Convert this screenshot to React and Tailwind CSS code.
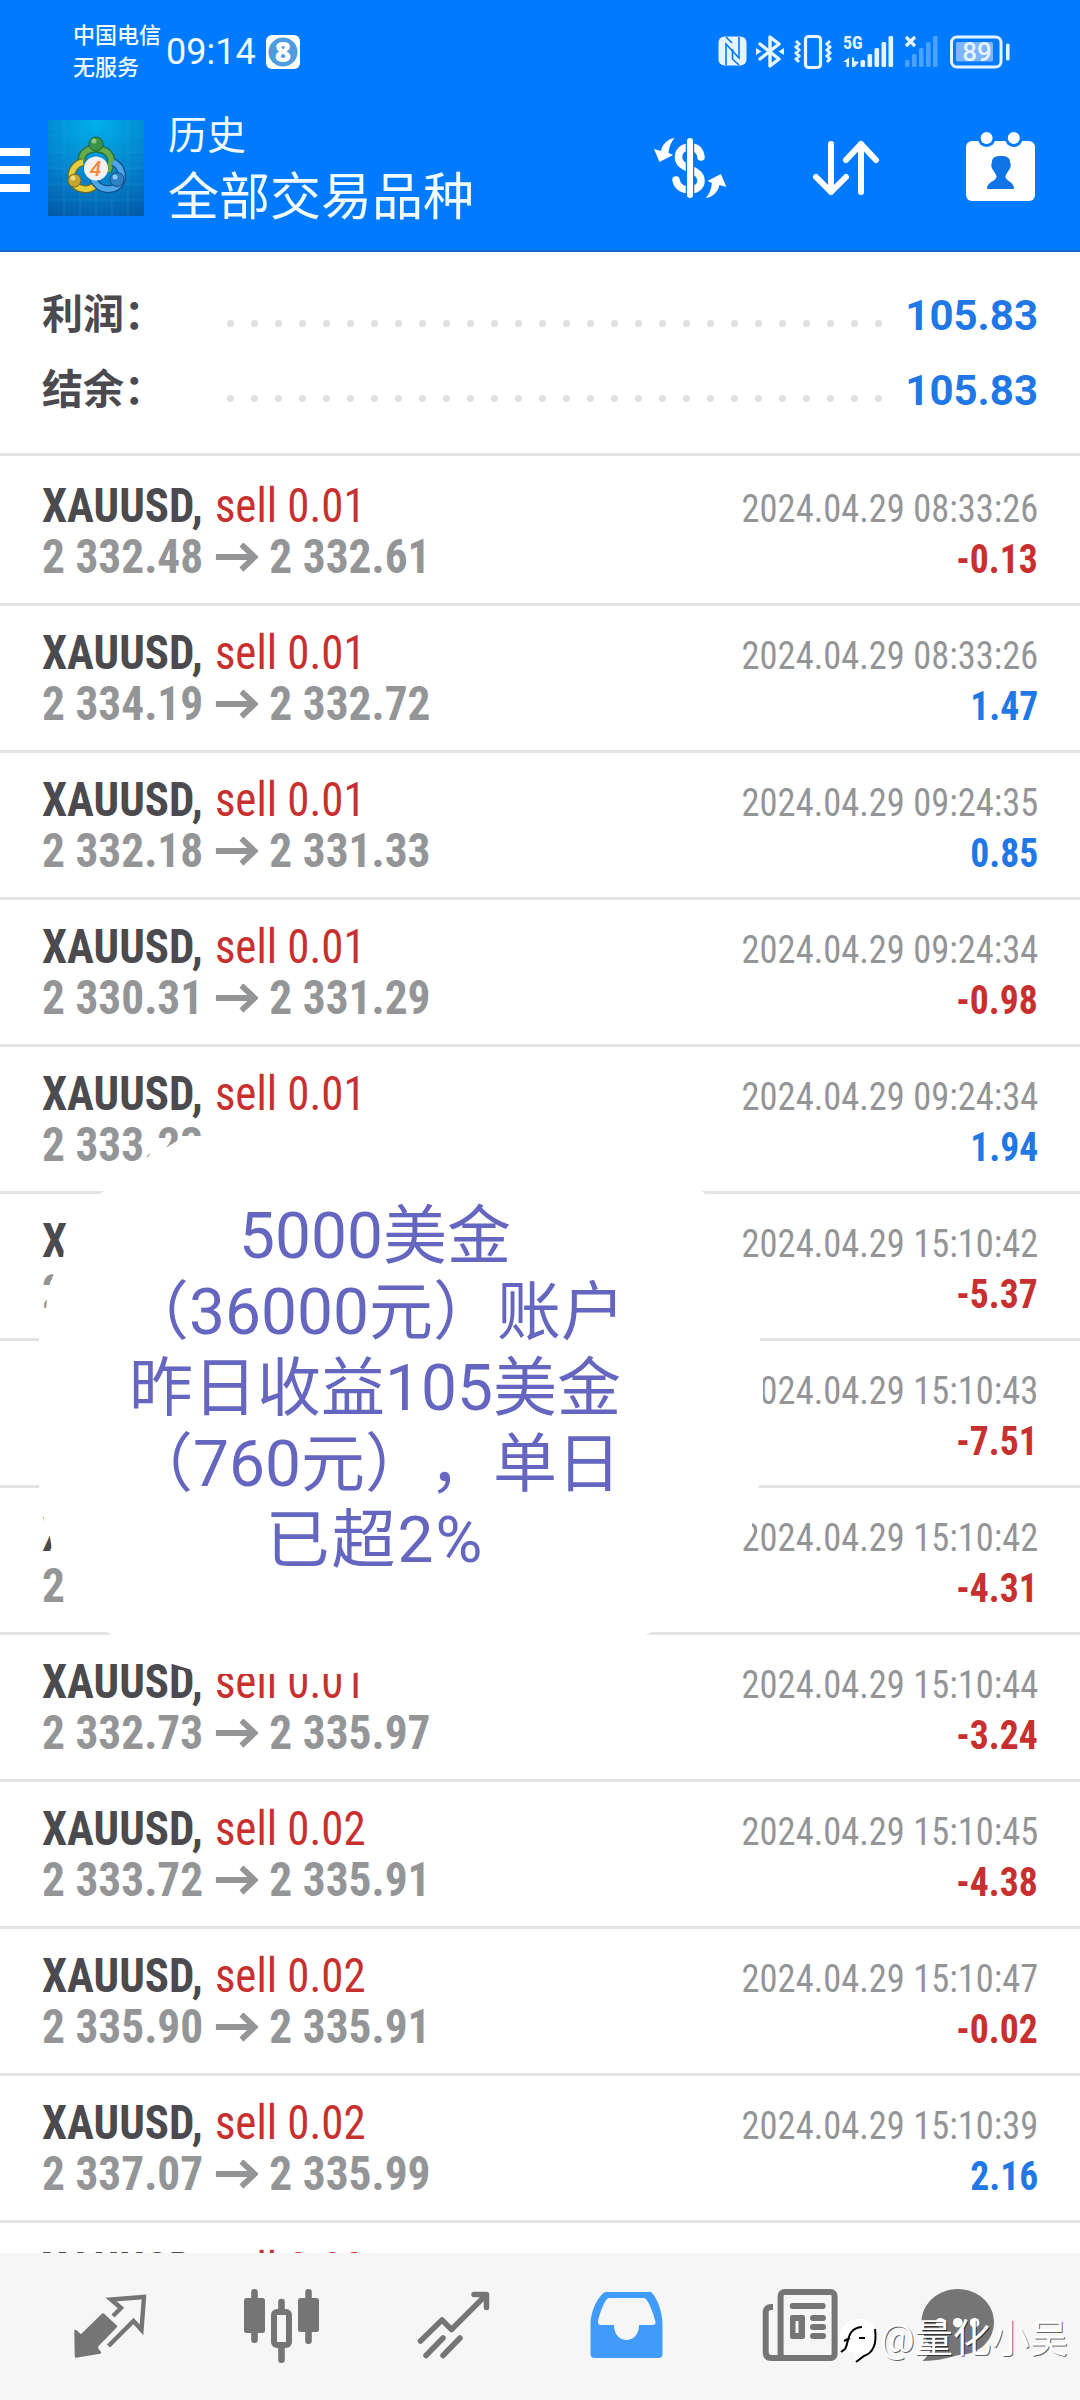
const DEALS = [
    { symbol: "XAUUSD", side: "sell 0.01", open: "2 332.48", close: "2 332.61", time: "2024.04.29 08:33:26", profit: "-0.13" },
    { symbol: "XAUUSD", side: "sell 0.01", open: "2 334.19", close: "2 332.72", time: "2024.04.29 08:33:26", profit: "1.47" },
    { symbol: "XAUUSD", side: "sell 0.01", open: "2 332.18", close: "2 331.33", time: "2024.04.29 09:24:35", profit: "0.85" },
    { symbol: "XAUUSD", side: "sell 0.01", open: "2 330.31", close: "2 331.29", time: "2024.04.29 09:24:34", profit: "-0.98" },
    { symbol: "XAUUSD", side: "sell 0.01", open: "2 333.23", close: "2 331.29", time: "2024.04.29 09:24:34", profit: "1.94" },
    { symbol: "XAUUSD", side: "sell 0.01", open: "2 330.60", close: "2 335.97", time: "2024.04.29 15:10:42", profit: "-5.37" },
    { symbol: "XAUUSD", side: "sell 0.01", open: "2 328.46", close: "2 335.97", time: "2024.04.29 15:10:43", profit: "-7.51" },
    { symbol: "XAUUSD", side: "sell 0.01", open: "2 331.66", close: "2 335.97", time: "2024.04.29 15:10:42", profit: "-4.31" },
    { symbol: "XAUUSD", side: "sell 0.01", open: "2 332.73", close: "2 335.97", time: "2024.04.29 15:10:44", profit: "-3.24" },
    { symbol: "XAUUSD", side: "sell 0.02", open: "2 333.72", close: "2 335.91", time: "2024.04.29 15:10:45", profit: "-4.38" },
    { symbol: "XAUUSD", side: "sell 0.02", open: "2 335.90", close: "2 335.91", time: "2024.04.29 15:10:47", profit: "-0.02" },
    { symbol: "XAUUSD", side: "sell 0.02", open: "2 337.07", close: "2 335.99", time: "2024.04.29 15:10:39", profit: "2.16" },
    { symbol: "XAUUSD", side: "sell 0.02", open: "", close: "", time: "", profit: "" },
]

const BAR_TOPS = [26, 20, 14, 8, 2]

const StatusIcons = () => (
    <div className="flex items-center text-[#e6f4ff]">
        {/* NFC */}
        <svg className="h-9 w-[29px]" viewBox="0 0 29 36">
            <rect x="0.5" y="2.5" width="28" height="29" rx="6" fill="currentColor" />
            <path d="M8 31V10L21 24V3" fill="none" stroke="#007aff" strokeWidth="1.6" />
            <path d="M8 3L14 9M14.5 15V25L21 31" fill="none" stroke="#007aff" strokeWidth="1.6" />
        </svg>
        {/* Bluetooth */}
        <svg className="ml-[9px] h-9 w-[28px]" viewBox="0 0 28 36">
            <path d="M4 10L23 25L14 32V3L23 10L4 25" fill="none" stroke="currentColor" strokeWidth="3.4" strokeLinejoin="round" strokeLinecap="round" />
            <path d="M0 14L5.5 17.5L0 21ZM28 14L22.5 17.5L28 21Z" fill="currentColor" />
        </svg>
        {/* Vibration */}
        <svg className="ml-[10px] h-9 w-[38px]" viewBox="0 0 38 36">
            <rect x="11.5" y="2.5" width="15" height="31" rx="3" fill="none" stroke="currentColor" strokeWidth="3.2" />
            <path d="M2 7L5 10L2 13L5 16L2 19L5 22L2 25L5 28M36 7L33 10L36 13L33 16L36 19L33 22L36 25L33 28" fill="none" stroke="currentColor" strokeWidth="3" />
        </svg>
        {/* 5G signal */}
        <svg className="ml-[11px] h-9 w-[51px]" viewBox="0 0 51 36">
            <text x="0" y="15" className="font-['Roboto_Condensed'] text-[18px] font-bold" fill="currentColor">5G</text>
            <path d="M0 28L6 23.5V33H3.5V28ZM9 23.5H11V27L16 28L11.5 33H9Z" fill="currentColor" />
            {BAR_TOPS.map((top, i) => (
                <rect key={top} x={17.5 + i * 7} y={top} width="4.6" height={33 - top} rx="1.5" fill="currentColor" />
            ))}
        </svg>
        {/* No service */}
        <svg className="ml-[10px] h-9 w-[34px]" viewBox="0 0 34 36">
            <path d="M2 3L11 12M11 3L2 12" stroke="currentColor" strokeWidth="3.2" />
            <g opacity="0.32">
                {BAR_TOPS.map((top, i) => (
                    <rect key={top} x={1 + i * 7} y={top} width="4.6" height={33 - top} rx="1.5" fill="currentColor" />
                ))}
            </g>
        </svg>
        {/* Battery */}
        <svg className="ml-[12px] h-9 w-[60px]" viewBox="0 0 60 36">
            <rect x="1.5" y="3" width="49.5" height="30" rx="5.5" fill="none" stroke="currentColor" strokeWidth="3" />
            <rect x="6" y="8" width="37" height="19.5" rx="1.5" fill="#80b4f8" />
            <rect x="56" y="9.5" width="3.6" height="17" rx="1.5" fill="currentColor" />
            <text x="27" y="27" textAnchor="middle" className="font-['Roboto'] text-[26px] font-medium" fill="currentColor">89</text>
        </svg>
    </div>
)

const AppLogo = () => (
    <svg className="h-24 w-24 shrink-0" viewBox="0 0 96 96">
        <defs>
            <radialGradient id="logoBg" cx="0.5" cy="0" r="1.1">
                <stop offset="0" stopColor="#00b1ea" />
                <stop offset="0.55" stopColor="#0384cd" />
                <stop offset="1" stopColor="#0459a9" />
            </radialGradient>
        </defs>
        <rect width="96" height="96" fill="url(#logoBg)" />
        <path d="M0 16H96M0 32H96M0 48H96M0 64H96M0 80H96M16 0V96M32 0V96M48 0V96M64 0V96M80 0V96" stroke="#3fb5e8" strokeOpacity="0.2" />
        <path d="M34 42C30 24 66 24 63 43L60 52" fill="none" stroke="#2b6b3a" strokeWidth="8" />
        <path d="M34 42C30 24 66 24 63 43L60 52" fill="none" stroke="#62ad4c" strokeWidth="5.5" />
        <path d="M35 42C19 46 20 68 36 69C42 70 46 67 49 63" fill="none" stroke="#6a6a25" strokeWidth="8" />
        <path d="M35 42C19 46 20 68 36 69C42 70 46 67 49 63" fill="none" stroke="#e5cf3c" strokeWidth="5.5" />
        <path d="M65 42C78 48 77 68 62 69C54 70 48 65 45 59" fill="none" stroke="#164e8c" strokeWidth="8" />
        <path d="M65 42C78 48 77 68 62 69C54 70 48 65 45 59" fill="none" stroke="#4ba7e8" strokeWidth="5.5" />
        <circle cx="48" cy="24" r="7" fill="#3b944a" stroke="#1f6133" />
        <circle cx="46" cy="21" r="2.5" fill="#8ccc7f" />
        <circle cx="26.5" cy="60.5" r="6.5" fill="#c6a52f" stroke="#77692b" />
        <circle cx="25" cy="58" r="2.5" fill="#ecdc7c" />
        <circle cx="69" cy="59.5" r="7" fill="#2f7fc4" stroke="#174d86" />
        <circle cx="67" cy="57" r="2.5" fill="#8ccaf4" />
        <circle cx="48" cy="48.5" r="12" fill="#f5f1ee" />
        <text x="47.5" y="56" textAnchor="middle" className="font-['Roboto'] text-[21px] font-medium italic" fill="#f08a3c">4</text>
    </svg>
)

const SWAP_ARROW = "M24.5 4C17 5 12 11 11 17L4 15L9.5 28L23 21L18.500 19C19 13 21 8 24.5 4Z"

const CurrencyIcon = () => (
    <svg className="h-[68px] w-20" viewBox="0 0 80 68">
        <path d="M51 23C50 16 46 13 40 13C33 13 28.5 17 28.5 23C28.5 30 34 32 40 35C47 38 51 41 51 47C51 52.5 46 56 40 56C32 56 27 52 26 46" fill="none" stroke="white" strokeWidth="7.5" strokeLinecap="round" />
        <path d="M40 7V61" stroke="#007aff" strokeWidth="8.5" />
        <path d="M40 7V61" stroke="white" strokeWidth="6" strokeLinecap="round" />
        <path d={SWAP_ARROW} fill="white" />
        <path d={SWAP_ARROW} fill="white" transform="rotate(180 40.2 34)" />
    </svg>
)

const SortIcon = () => (
    <svg className="h-[60px] w-[72px]" viewBox="0 0 72 60" fill="none" stroke="white" strokeWidth="6" strokeLinecap="round" strokeLinejoin="round">
        <path d="M21 6V54M6 39L21 54L36 39" />
        <path d="M51 54V6M36 22L51 6L66 22" />
    </svg>
)

const CalendarIcon = () => (
    <svg className="h-[78px] w-[78px]" viewBox="0 0 78 78">
        <rect x="4" y="13" width="69" height="60" rx="6" fill="white" />
        <circle cx="24.6" cy="10" r="9" fill="#007aff" />
        <circle cx="51.8" cy="10" r="9" fill="#007aff" />
        <circle cx="24.6" cy="10" r="6" fill="white" />
        <circle cx="51.8" cy="10" r="6" fill="white" />
        <path d="M39 28C44 28 48 29 48 34C49.5 37 48.5 40 47 42C44.5 46 43.5 47 43.500 49C45 54 52 53.5 52 61H25C25 53.5 33 54 34.5 49C34.5 47 33.5 46 31 42C29.5 40 28.5 37 30 34C30 29 34 28 39 28Z" fill="#1073e6" />
    </svg>
)

const Header = () => (
    <header className="h-[252px] border-b-2 border-[#1565c8] bg-[#007aff] text-[#f0faff]">
        <div className="flex h-[104px] items-center pl-[73px] pr-[70px]">
            <div className="text-[22px] font-medium leading-[32px]">
                <div>中国电信</div>
                <div>无服务</div>
            </div>
            <span className="ml-[5px] text-[36px] leading-[40px]">09:14</span>
            <svg className="ml-[10px] h-[34px] w-[34px]" viewBox="0 0 34 34">
                <rect width="34" height="34" rx="6" fill="white" />
                <circle cx="17" cy="17" r="14.5" fill="#4f9be0" />
                <text x="17" y="27" textAnchor="middle" className="font-['Noto_Sans'] text-[28px] font-black" fill="white">8</text>
            </svg>
            <div className="ml-auto">
                <StatusIcons />
            </div>
        </div>
        <div className="flex h-[146px] items-start">
            <div className="mt-[44px] flex w-[30px] flex-col gap-[10px]">
                <span className="h-2 bg-white" />
                <span className="h-2 bg-white" />
                <span className="h-2 bg-white" />
            </div>
            <div className="ml-[18px] mt-4">
                <AppLogo />
            </div>
            <div className="ml-6 mt-[2px]">
                <div className="text-[39px] leading-[60px]">历史</div>
                <div className="text-[51px] leading-[63px]">全部交易品种</div>
            </div>
            <div className="ml-auto mt-[30px]">
                <CurrencyIcon />
            </div>
            <div className="ml-[80px] mt-[34px]">
                <SortIcon />
            </div>
            <div className="ml-[80px] mr-[40px] mt-6">
                <CalendarIcon />
            </div>
        </div>
    </header>
)

const SummaryRow = ({ label, value }) => (
    <div className="flex h-[75px] items-center">
        <span className="w-[185px] text-[41px] font-bold text-[#4a4a4f]">{label}</span>
        <div className="mt-[15px] flex w-[655px] justify-between">
            {Array.from({ length: 28 }, (_, i) => (
                <span key={i} className="h-[7px] w-[7px] rounded-full bg-[#e0e0e0]" />
            ))}
        </div>
        <span className="ml-auto text-[42px] font-bold text-[#1f78e6]">{value}</span>
    </div>
)

const DealRow = ({ deal }) => (
    <div className="h-[147px] border-t-[3px] border-[#e3e3e3] px-[42px] pt-[21px] font-['Roboto_Condensed'] leading-[51px] first:h-[150px] first:pt-[24px]">
        <div className="flex h-[51px] items-baseline justify-between">
            <div className="origin-left scale-x-[0.935] text-[48px]">
                <span className="font-bold text-[#4a4a4f]">{deal.symbol}, </span>
                <span className="ml-[2px] text-[#c8302f]">{deal.side}</span>
            </div>
            <span className="origin-right scale-x-[0.935] text-[39px] text-[#949597]">{deal.time}</span>
        </div>
        {deal.open && (
            <div className="flex h-[51px] items-baseline justify-between font-bold">
                <div className="flex origin-left scale-x-[0.945] items-baseline text-[48px] text-[#949597]">
                    <span>{deal.open}</span>
                    <svg className="mx-3 h-[30px] w-[46px]" viewBox="0 0 46 30" fill="none" stroke="currentColor" strokeWidth="6">
                        <path d="M1 14H43M28 1.5L42 14L28 26.5" />
                    </svg>
                    <span>{deal.close}</span>
                </div>
                <span className={`origin-right scale-x-[0.94] text-[40px] ${deal.profit.startsWith("-") ? "text-[#c8302f]" : "text-[#1f78e6]"}`}>
                    {deal.profit}
                </span>
            </div>
        )}
    </div>
)

const Note = () => (
    <>
        <svg className="absolute left-0 top-[1100px] h-[600px] w-[800px]" viewBox="0 1100 800 600">
            <path
                d="M46 1310L48 1290L54 1273L63 1258L66 1230L76 1225L86 1207L101 1193L142 1165L150 1154L167 1147L177 1141L187 1136L201 1136L212 1122L300 1117H500L600 1125L650 1150L703 1192L735 1220L740 1265L757 1300L760 1339L763 1375V1405L759 1486L752 1518L752 1528L738 1550L700 1600L648 1634L560 1662L450 1668L365 1671L350 1674H215L192 1670L172 1664L110 1634L70 1604L66 1560L52 1550L50 1537L44 1520L39 1486V1339Z"
                fill="white"
            />
        </svg>
        <div className="absolute left-[75px] top-[1199px] w-[600px] text-center text-[64px] leading-[76px] text-[#6566bf] [text-spacing-trim:space-all]">
            <div>5000美金</div>
            <div>（36000元）账户</div>
            <div>昨日收益105美金</div>
            <div>（760元），单日</div>
            <div className="tracking-[2px]">已超2%</div>
        </div>
    </>
)

const TabBar = () => (
    <nav className="absolute inset-x-0 bottom-0 flex h-[147px] items-start gap-[82px] bg-[#f6f6f6] pl-[65px] pt-[27px] text-[#757575]">
        {/* Quotes */}
        <svg className="h-[90px] w-[90px] shrink-0" viewBox="0 0 90 90">
            <path d="M48 36L56 28L46 19.5L79 17L76.5 50L68.5 41L43.5 66" fill="none" stroke="currentColor" strokeWidth="4.4" />
            <path d="M38 34.5L51 46.5L32 66V69L35 72.5L11 76.5L10.5 51L16 56Z" fill="currentColor" stroke="currentColor" strokeWidth="2.5" strokeLinejoin="round" />
        </svg>
        {/* Charts */}
        <svg className="h-[90px] w-[90px] shrink-0" viewBox="0 0 90 90" fill="currentColor">
            <rect x="14.2" y="9" width="6.6" height="54" rx="3" />
            <rect x="7" y="18" width="21" height="35" rx="2.5" />
            <rect x="41.2" y="18.7" width="6.6" height="20" rx="3" />
            <rect x="41.2" y="60" width="6.6" height="23" rx="3" />
            <rect x="37" y="32" width="15" height="33" rx="3" fill="#f6f6f6" stroke="currentColor" strokeWidth="6" />
            <rect x="68.2" y="9" width="6.6" height="55" rx="3" />
            <rect x="61" y="18" width="21" height="34" rx="2.5" />
        </svg>
        {/* Trade */}
        <svg className="h-[90px] w-[90px] shrink-0" viewBox="0 0 90 90" fill="none" stroke="currentColor" strokeWidth="5.5" strokeLinecap="round" strokeLinejoin="round">
            <path d="M11.5 61L33 40L42.5 49.5L76.5 15.5M65 14.5H77.5V27.5" />
            <path d="M17 75.5L34 58M34 75.5L51 58" />
        </svg>
        {/* History */}
        <svg className="h-[90px] w-[90px] shrink-0" viewBox="0 0 90 90">
            <path
                fillRule="evenodd"
                d="M24 12H70C76 17 81.5 32 81.5 44V74C81.5 76.5 80 78 77.5 78H13.5C11 78 9.5 76.5 9.5 74V44C9.5 32 16 17 24 12ZM28 18C24 18 18 35 17 42C17 44 18 45 20 45H33C33 65 58 65 58 45H71C73.5 45 75 44 74.5 42C73 35 67 18 63 18Z"
                fill="#419bfa"
            />
        </svg>
        {/* News */}
        <svg className="h-[90px] w-[90px] shrink-0" viewBox="0 0 90 90">
            <path d="M20 27H18.5C14.5 27 12.7 29 12.7 32V72C12.7 76 14.5 78 18.5 78H40" fill="none" stroke="currentColor" strokeWidth="6" />
            <rect x="27.6" y="12" width="54" height="66" rx="4" fill="none" stroke="currentColor" strokeWidth="6" />
            <rect x="36.7" y="23" width="36" height="6" rx="3" fill="currentColor" />
            <path fillRule="evenodd" d="M39 35H50Q52 35 52 37V57Q52 59 50 59H39Q37 59 37 57V37Q37 35 39 35ZM42.5 41V53H45.5V41Z" fill="currentColor" />
            <rect x="57" y="35" width="16" height="6" rx="3" fill="currentColor" />
            <rect x="57" y="44" width="16" height="6" rx="3" fill="currentColor" />
            <rect x="57" y="53" width="16" height="6" rx="3" fill="currentColor" />
        </svg>
        {/* Messages */}
        <svg className="-ml-[12px] h-[90px] w-[90px] shrink-0" viewBox="0 0 90 90">
            <path d="M44.7 9C65 9 81 24 81 42C81 61 65 75 46 75C38 77 26 81 9.5 81C15 76 19 70 18 66C12 60 8.5 52 8.5 42C8.5 24 25 9 44.7 9Z" fill="currentColor" />
            <circle cx="27.5" cy="42.7" r="4.8" fill="white" />
            <circle cx="44.7" cy="42.7" r="4.8" fill="white" />
            <circle cx="61.6" cy="42.7" r="4.8" fill="white" />
        </svg>
    </nav>
)

const Watermark = () => (
    <div className="absolute left-[836px] top-[2314px] flex items-center text-white">
        <svg className="h-[50px] w-[44px]" viewBox="0 0 44 50">
            <path d="M20 5C32 3 40 10 39 22C39 33 34 38 27 42L20 48L19 38L9 39C-1 30 2 8 20 5Z" fill="white" />
            <path d="M5 38L9 35C13 30 10 14 26 13M8 27L14 24M23 24H29M39 15C41 30 37 39 28 42L20 48" fill="none" stroke="black" strokeWidth="2" />
        </svg>
        <span className="text-[38.4px] leading-[46px] [text-shadow:1px_1px_0.5px_rgba(0,0,0,0.6)]">@量化小吴</span>
    </div>
)

export default function App() {
    return (
        <div className="relative h-[2400px] w-[1080px] overflow-hidden bg-white font-['Roboto','Noto_Sans_CJK_SC',sans-serif]">
            <Header />
            <section className="h-[201px] pl-[42px] pr-[42px] pt-[26px]">
                <SummaryRow label="利润：" value="105.83" />
                <SummaryRow label="结余：" value="105.83" />
            </section>
            <section>
                {DEALS.map((deal, index) => (
                    <DealRow key={index} deal={deal} />
                ))}
            </section>
            <Note />
            <TabBar />
            <Watermark />
        </div>
    )
}
